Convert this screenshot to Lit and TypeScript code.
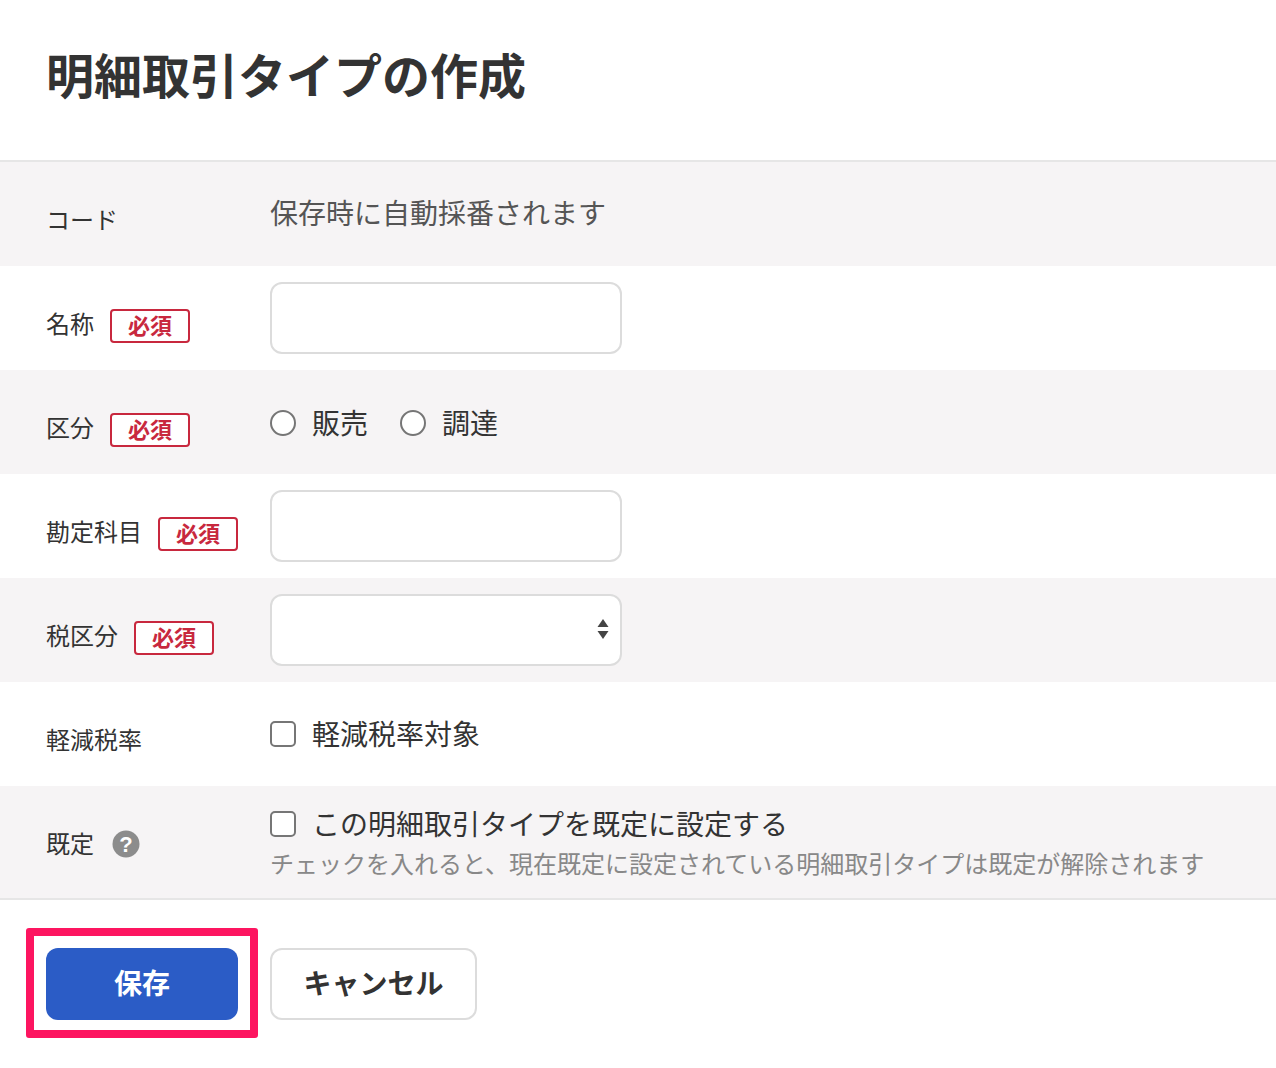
import { LitElement, html, css } from "lit";
import { customElement } from "lit/decorators.js";

@customElement("app-root")
export class AppRoot extends LitElement {
  static styles = css`
    :host {
      display: block;
      width: 1276px;
      height: 1068px;
      overflow: hidden;
      background: #fff;
      font-family: "Noto Sans CJK JP", "Noto Sans", sans-serif;
      color: #333;
    }
    *, *::after { box-sizing: border-box; }
    .head {
      height: 162px;
      padding: 43px 46px 0;
      border-bottom: 2px solid #e6e6e6;
    }
    h1 {
      margin: 0;
      font-size: 48px;
      line-height: 60px;
      font-weight: 700;
      color: #333;
    }
    .row {
      display: flex;
      height: 104px;
      background: #fff;
    }
    .row.alt { background: #f6f4f5; }
    .row.last { height: 112px; }
    .lab {
      width: 270px;
      flex: none;
      padding: 40px 0 0 46px;
      display: flex;
      align-items: center;
      align-self: flex-start;
      font-size: 24px;
      line-height: 34px;
      color: #333;
    }
    .lab-text { margin-bottom: 6px; }
    .badge {
      display: flex;
      align-items: center;
      justify-content: center;
      width: 80px;
      height: 34px;
      margin-left: 16px;
      padding-bottom: 4px;
      border: 2px solid #c8283e;
      border-radius: 4px;
      color: #c8283e;
      font-size: 22px;
      font-weight: 700;
      line-height: 1;
      background: #fff;
    }
    .help { margin-left: 18px; margin-bottom: 4px; width: 28px; height: 28px; display: block; }
    .val { flex: 1; min-width: 0; }
    .val.pad { padding-top: 16px; }
    .static {
      padding-top: 27px;
      font-size: 28px;
      line-height: 46px;
      color: #555;
    }
    input.text, select {
      display: block;
      width: 352px;
      height: 72px;
      border: 2px solid #dcdcdc;
      border-radius: 12px;
      background: #fff;
      appearance: none;
      margin: 0;
      padding: 0 16px;
      font: inherit;
    }
    .sel { position: relative; width: 352px; }
    .arrow { position: absolute; right: 12px; top: 24px; width: 14px; height: 22px; pointer-events: none; }
    .opts { display: flex; align-items: flex-start; padding-top: 37px; }
    .opt {
      display: flex;
      align-items: center;
      font-size: 28px;
      line-height: 30px;
      color: #333;
    }
    .opt + .opt { margin-left: 32px; }
    .mark {
      width: 26px;
      height: 26px;
      flex: none;
      margin-right: 16px;
      border: 2px solid #767676;
      background: #fff;
    }
    .mark.radio { border-radius: 50%; margin-top: 2px; }
    .mark.check { border-radius: 5px; margin-top: 2px; }
    .check-line { padding-top: 36px; }
    .check-two { padding-top: 22px; }
    .note {
      margin-top: 8px;
      font-size: 24px;
      line-height: 34px;
      color: #888;
      white-space: nowrap;
    }
    .foot {
      border-top: 2px solid #e6e6e6;
      padding-top: 48px;
      padding-left: 46px;
      display: flex;
      gap: 32px;
      align-items: flex-start;
    }
    .btn {
      height: 72px;
      border-radius: 12px;
      font: inherit;
      font-size: 28px;
      font-weight: 700;
      display: flex;
      align-items: center;
      justify-content: center;
      padding: 0 0 4px;
      margin: 0;
    }
    .save {
      position: relative;
      width: 192px;
      background: #2b5cc6;
      border: none;
      color: #fff;
    }
    .save::after {
      content: "";
      position: absolute;
      left: -20px;
      top: -20px;
      width: 232px;
      height: 110px;
      border: 8px solid #fd1560;
      border-radius: 3px;
      pointer-events: none;
    }
    .cancel {
      width: 207px;
      background: #fff;
      border: 2px solid #dcdcdc;
      color: #333;
    }
  `;

  private badge() {
    return html`<span class="badge">必須</span>`;
  }

  render() {
    return html`
      <div class="head"><h1>明細取引タイプの作成</h1></div>
      <div class="row alt">
        <div class="lab"><span class="lab-text">コード</span></div>
        <div class="val static">保存時に自動採番されます</div>
      </div>
      <div class="row">
        <div class="lab"><span class="lab-text">名称</span>${this.badge()}</div>
        <div class="val pad"><input class="text" type="text" /></div>
      </div>
      <div class="row alt">
        <div class="lab"><span class="lab-text">区分</span>${this.badge()}</div>
        <div class="val opts">
          <span class="opt"><span class="mark radio"></span>販売</span>
          <span class="opt"><span class="mark radio"></span>調達</span>
        </div>
      </div>
      <div class="row">
        <div class="lab"><span class="lab-text">勘定科目</span>${this.badge()}</div>
        <div class="val pad"><input class="text" type="text" /></div>
      </div>
      <div class="row alt">
        <div class="lab"><span class="lab-text">税区分</span>${this.badge()}</div>
        <div class="val pad">
          <div class="sel">
            <select></select>
            <svg class="arrow" viewBox="0 0 14 22"><path d="M7 1l5.5 8h-11zM7 21l5.5-8h-11z" fill="#444"/></svg>
          </div>
        </div>
      </div>
      <div class="row">
        <div class="lab"><span class="lab-text">軽減税率</span></div>
        <div class="val check-line">
          <span class="opt"><span class="mark check"></span>軽減税率対象</span>
        </div>
      </div>
      <div class="row alt last">
        <div class="lab"><span class="lab-text">既定</span>
          <svg class="help" viewBox="0 0 28 28">
            <circle cx="14" cy="14" r="13.5" fill="#8c8c8c"/>
            <text x="14" y="21.5" text-anchor="middle" font-size="22" font-weight="700" fill="#fff" font-family="Liberation Sans, sans-serif">?</text>
          </svg>
        </div>
        <div class="val check-two">
          <span class="opt"><span class="mark check"></span>この明細取引タイプを既定に設定する</span>
          <div class="note">チェックを入れると、現在既定に設定されている明細取引タイプは既定が解除されます</div>
        </div>
      </div>
      <div class="foot">
        <button class="btn save">保存</button>
        <button class="btn cancel">キャンセル</button>
      </div>
    `;
  }
}
